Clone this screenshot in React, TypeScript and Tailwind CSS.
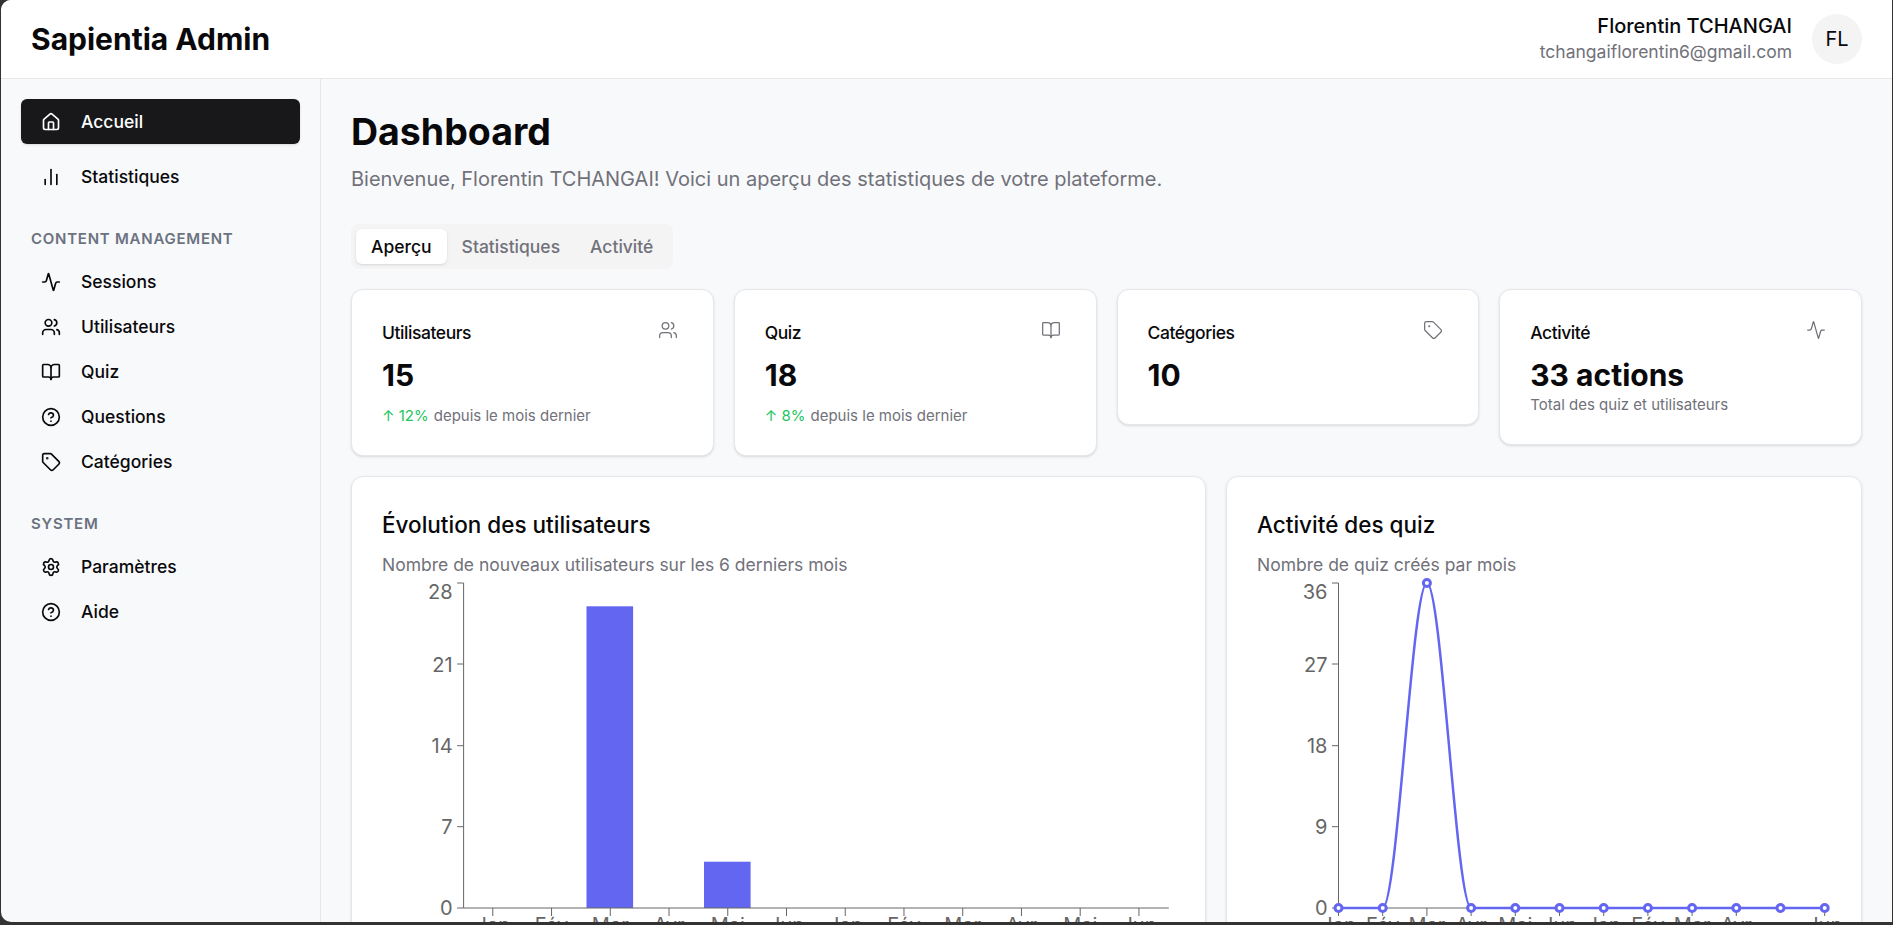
import { useState } from 'react';
import type { ReactNode } from 'react';
import { Activity, BarChart2, BookOpen, CircleHelp, Home, Settings, Tag, Users } from 'lucide-react';
import type { LucideIcon } from 'lucide-react';

const months = ['Jan', 'Fév', 'Mar', 'Avr', 'Mai', 'Jun', 'Jan', 'Fév', 'Mar', 'Avr', 'Mai', 'Jun'];
const tabs = ['Aperçu', 'Statistiques', 'Activité'];

const INDIGO = '#6366f1';
const AXIS = '#666666';

function NavItem({ icon: Icon, label, active = false }: { icon: LucideIcon; label: string; active?: boolean }) {
  return (
    <a
      className={
        active
          ? 'flex h-[45px] items-center gap-[20px] rounded-md bg-[#18181b] px-[20px] text-[17.5px] font-medium text-white shadow-sm'
          : 'flex h-[45px] items-center gap-[20px] rounded-md px-[20px] text-[17.5px] font-medium text-[#09090b]'
      }
    >
      <Icon size={20} />
      <span className="pt-[2px]">{label}</span>
    </a>
  );
}

function NavHeading({ children }: { children: ReactNode }) {
  return (
    <h3 className="mb-[10px] mt-[30px] px-[10px] text-[15px] font-semibold uppercase leading-[20px] tracking-[0.05em] text-[#6b7280]">
      {children}
    </h3>
  );
}

function StatCard({ title, value, icon: Icon, children }: { title: string; value: string; icon: LucideIcon; children?: ReactNode }) {
  return (
    <div className="rounded-xl border border-[#e5e7eb] bg-white px-[30px] pb-[29px] pt-[30px] shadow-sm">
      <div className="flex items-start justify-between pr-[5px]">
        <span className="text-[17.5px] font-medium leading-[25px] tracking-tight text-[#09090b]">{title}</span>
        <Icon size={20} strokeWidth={1.5} className="text-[#71717a]" />
      </div>
      <div className="mt-[10px] text-[30px] font-bold leading-[40px] text-[#09090b]">{value}</div>
      {children}
    </div>
  );
}

function Trend({ pct }: { pct: string }) {
  return (
    <div className="mt-[11px] text-[15px] leading-[20px] text-[#71717a]">
      <span className="mr-[5px] text-[#22c55e]">↑ {pct}</span>
      depuis le mois dernier
    </div>
  );
}

function ChartCard({ title, subtitle, children }: { title: string; subtitle: string; children: ReactNode }) {
  return (
    <div className="rounded-xl border border-[#e5e7eb] bg-white px-[30px] pt-[30px] shadow-sm">
      <h2 className="text-[22.5px] font-medium leading-[35px] text-[#09090b]">{title}</h2>
      <p className="mt-[10px] text-[17.5px] leading-[25px] text-[#71717a]">{subtitle}</p>
      {children}
    </div>
  );
}

function YAxis({ x, labels }: { x: number; labels: string[] }) {
  const ticks = [6, 87, 168.7, 249.7, 331];
  const labelY = [15, 88, 168.7, 249.7, 331];
  return (
    <g>
      <line x1={x} x2={x} y1={6} y2={331} stroke={AXIS} />
      {ticks.map((y, i) => (
        <g key={y}>
          <line x1={x - 6.5} x2={x} y1={y} y2={y} stroke={AXIS} />
          <text x={x - 11} y={labelY[i]} dy="0.355em" textAnchor="end" fontSize={20} fill={AXIS}>
            {labels[i]}
          </text>
        </g>
      ))}
    </g>
  );
}

function XAxis({ from, to, first, step, skip }: { from: number; to: number; first: number; step: number; skip?: number }) {
  return (
    <g>
      <line x1={from} x2={to} y1={331} y2={331} stroke={AXIS} />
      {months.map((m, i) =>
        i === skip ? null : (
          <g key={i}>
            <line x1={first + i * step} x2={first + i * step} y1={331} y2={339} stroke={AXIS} />
            <text x={first + i * step} y={354.5} textAnchor="middle" fontSize={20} fill={AXIS}>
              {m}
            </text>
          </g>
        ),
      )}
    </g>
  );
}

function UsersChart() {
  return (
    <svg width="793" height="370" className="block overflow-visible">
      <rect x={204.5} y={29.3} width={46.6} height={301.7} fill={INDIGO} />
      <rect x={322} y={284.7} width={46.6} height={46.3} fill={INDIGO} />
      <YAxis x={81.6} labels={['28', '21', '14', '7', '0']} />
      <XAxis from={81.6} to={786.8} first={110.8} step={58.74} />
    </svg>
  );
}

function QuizChart() {
  const x0 = 81.5;
  const step = 44.2;
  const xs = months.map((_, i) => x0 + i * step);
  // monotone curve: flat tangents at the two feet and at the peak
  const d = `M${xs[0]} 331L${xs[1]} 331C${xs[1] + step / 3} 331 ${xs[2] - step / 3} 6 ${xs[2]} 6C${xs[2] + step / 3} 6 ${xs[3] - step / 3} 331 ${xs[3]} 331L${xs[11]} 331`;
  return (
    <svg width="574" height="370" className="block overflow-visible">
      <YAxis x={x0} labels={['36', '27', '18', '9', '0']} />
      <XAxis from={x0} to={xs[11]} first={x0} step={step} skip={10} />
      <path d={d} fill="none" stroke={INDIGO} strokeWidth={2.5} />
      {xs.map((x, i) => (
        <circle key={i} cx={x} cy={i === 2 ? 6 : 331} r={3.5} fill="#fff" stroke={INDIGO} strokeWidth={3} />
      ))}
    </svg>
  );
}

export default function App() {
  const [tab, setTab] = useState(0);

  return (
    <div className="h-[925px] w-[1893px] overflow-hidden bg-[#333333] pb-[3px] pl-[1px] pr-[1px] font-[family-name:Inter,sans-serif]">
      <div className="flex h-full flex-col overflow-hidden rounded-l-[10px] bg-[#f8f9fb]">
        <header className="flex h-[79px] shrink-0 items-center justify-between border-b border-[#e5e7eb] bg-white pl-[30px] pr-[30px]">
          <h1 className="text-[30px] font-bold text-[#09090b]">Sapientia Admin</h1>
          <div className="flex items-center gap-[20px]">
            <div className="text-right">
              <div className="text-[20px] font-medium leading-[25px] text-[#09090b]">Florentin TCHANGAI</div>
              <div className="text-[17.5px] leading-[25px] text-[#71717a]">tchangaiflorentin6@gmail.com</div>
            </div>
            <div className="flex size-[50px] items-center justify-center rounded-full bg-[#f4f4f5] text-[20px] text-[#09090b]">FL</div>
          </div>
        </header>

        <div className="flex min-h-0 flex-1">
          <aside className="w-[320px] shrink-0 border-r border-[#e5e7eb] px-[20px] pt-[20px]">
            <nav className="flex flex-col gap-[10px]">
              <NavItem icon={Home} label="Accueil" active />
              <NavItem icon={BarChart2} label="Statistiques" />
            </nav>
            <NavHeading>Content Management</NavHeading>
            <nav className="flex flex-col">
              <NavItem icon={Activity} label="Sessions" />
              <NavItem icon={Users} label="Utilisateurs" />
              <NavItem icon={BookOpen} label="Quiz" />
              <NavItem icon={CircleHelp} label="Questions" />
              <NavItem icon={Tag} label="Catégories" />
            </nav>
            <NavHeading>System</NavHeading>
            <nav className="flex flex-col">
              <NavItem icon={Settings} label="Paramètres" />
              <NavItem icon={CircleHelp} label="Aide" />
            </nav>
          </aside>

          <main className="min-w-0 flex-1 px-[30px] pt-[30px]">
            <h1 className="text-[37.5px] font-bold leading-[45px] text-[#09090b]">Dashboard</h1>
            <p className="mt-[10px] text-[20px] leading-[30px] text-[#71717a]">
              Bienvenue, Florentin TCHANGAI! Voici un aperçu des statistiques de votre plateforme.
            </p>

            <div className="mt-[30px] flex h-[45px] w-fit items-center rounded-lg bg-[#f4f4f5] p-[5px]">
              {tabs.map((t, i) => (
                <button
                  key={t}
                  onClick={() => setTab(i)}
                  className={
                    tab === i
                      ? 'h-[35px] rounded-md bg-white px-[15px] pt-[2px] text-[17.5px] font-medium text-[#09090b] shadow-sm'
                      : 'h-[35px] rounded-md px-[15px] pt-[2px] text-[17.5px] font-medium text-[#71717a]'
                  }
                >
                  {t}
                </button>
              ))}
            </div>

            <div className="mt-[20px] grid grid-cols-4 items-start gap-[20px]">
              <StatCard title="Utilisateurs" value="15" icon={Users}>
                <Trend pct="12%" />
              </StatCard>
              <StatCard title="Quiz" value="18" icon={BookOpen}>
                <Trend pct="8%" />
              </StatCard>
              <StatCard title="Catégories" value="10" icon={Tag} />
              <StatCard title="Activité" value="33 actions" icon={Activity}>
                <p className="text-[15px] leading-[20px] text-[#71717a]">Total des quiz et utilisateurs</p>
              </StatCard>
            </div>

            <div className="mt-[20px] grid grid-cols-[855px_1fr] gap-[20px]">
              <ChartCard title="Évolution des utilisateurs" subtitle="Nombre de nouveaux utilisateurs sur les 6 derniers mois">
                <UsersChart />
              </ChartCard>
              <ChartCard title="Activité des quiz" subtitle="Nombre de quiz créés par mois">
                <QuizChart />
              </ChartCard>
            </div>
          </main>
        </div>
      </div>
    </div>
  );
}
